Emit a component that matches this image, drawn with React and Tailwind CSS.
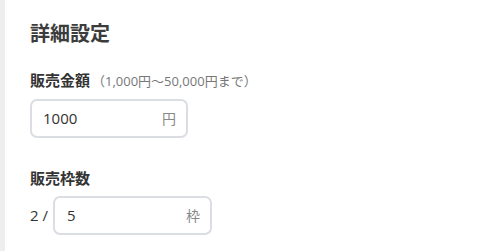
export default function App() {
  const font = { fontFamily: '"Open Sans", "Noto Sans CJK JP", sans-serif' };

  return (
    <div className="flex h-[251px] w-[491px] bg-white text-[#333]" style={font}>
      <div className="w-[5px] shrink-0 bg-[#eeeeee]"></div>

      <div className="flex-1 pl-[25px] pt-[20px]">
        <h2 className="text-[20px] font-bold leading-[28px] text-[#3c3c3c]">詳細設定</h2>

        {/* 販売金額 */}
        <div className="mt-[21px] flex items-baseline">
          <span className="text-[15px] font-bold leading-[22px]">販売金額</span>
          <span className="ml-[2px] text-[13px] text-[#777]">（1,000円〜50,000円まで）</span>
        </div>
        <div className="mt-[7px] flex h-[39px] w-[158px] items-center justify-between rounded-[7px] border-2 border-[#dadee2] pl-[11px] pr-[10px]">
          <span className="text-[15px] text-[#333]">1000</span>
          <span className="text-[14px] text-[#888]">円</span>
        </div>

        {/* 販売枠数 */}
        <div className="mt-[29px] text-[15px] font-bold leading-[22px]">販売枠数</div>
        <div className="mt-[7px] flex items-center">
          <span className="w-[23px] text-[15px] text-[#333]">2 /</span>
          <div className="flex h-[39px] w-[159px] items-center justify-between rounded-[7px] border-2 border-[#dadee2] pl-[12px] pr-[10px]">
            <span className="text-[15px] text-[#333]">5</span>
            <span className="text-[14px] text-[#888]">枠</span>
          </div>
        </div>
      </div>
    </div>
  );
}
